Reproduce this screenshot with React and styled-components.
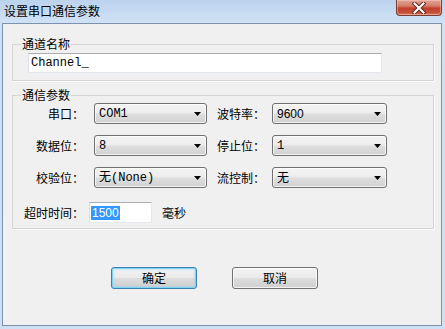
import React from 'react';
import styled, { createGlobalStyle } from 'styled-components';

const Global = createGlobalStyle`
  html, body { margin: 0; padding: 0; background: #cfe0f3; }
  body { font-family: "Noto Sans CJK SC", "Liberation Sans", sans-serif; font-size: 12px; color: #000; }
`;

const Window = styled.div`
  width: 445px;
  height: 329px;
  box-sizing: border-box;
  padding: 0 3px 3px 2px;
  display: flex;
  flex-direction: column;
  background: linear-gradient(to bottom, #bcd3ee 0px, #cfe1f5 22px, #cde0f4 100%);
`;

const TitleBar = styled.div`
  height: 23px;
  flex: none;
  display: flex;
  align-items: flex-start;
`;

const TitleText = styled.div`
  padding: 4px 0 0 2px;
  line-height: 14px;
  font-size: 12px;
`;

const CloseButton = styled.div`
  margin-left: auto;
  width: 46px;
  height: 16px;
  box-sizing: border-box;
  border: 1px solid #7a3a30;
  border-top: none;
  border-radius: 0 0 4px 4px;
  background: linear-gradient(to bottom, #e0a596 0%, #d47c69 40%, #c2402c 55%, #c5503a 85%, #dc8668 100%);
  box-shadow: inset 0 0 0 1px rgba(255, 210, 200, 0.45);
  display: flex;
  align-items: center;
  justify-content: center;
`;

const Content = styled.div`
  flex: 1;
  border: 1px solid #7d92ad;
  background: #f0f0f0;
  padding: 13px 7px 0 9px;
  display: flex;
  flex-direction: column;
`;

const Group = styled.fieldset`
  margin: ${p => p.$top || 0}px 0 0 0;
  padding: ${p => p.$pad};
  border: 1px solid #d5d5d5;
  box-shadow: 1px 1px 0 #ffffff;
  min-width: 0;
`;

const Legend = styled.legend`
  margin-left: 8px;
  padding: 0 1px;
  line-height: 14px;
  height: 14px;
  font-size: 12px;
`;

const NameRow = styled.div`
  padding-left: 15px;
  display: flex;
`;

const TextBox = styled.div`
  width: ${p => p.$w}px;
  height: ${p => p.$h}px;
  margin-left: ${p => p.$ml || 0}px;
  box-sizing: border-box;
  background: #fff;
  border: 1px solid #e3e9ef;
  border-top-color: #abadb3;
  border-left-color: #dbdfe6;
  display: flex;
  align-items: center;
  padding-left: ${p => p.$pl || 2}px;
  font-family: ${p => (p.$mono ? '"Liberation Mono", "Noto Sans CJK SC", monospace' : '"Liberation Sans", "Noto Sans CJK SC", sans-serif')};
  font-size: 12px;
`;

const Selected = styled.span`
  background: #3399ff;
  color: #fff;
  line-height: 14px;
  height: 14px;
  padding: 0 1px;
`;

const Grid = styled.div`
  display: grid;
  grid-template-columns: 70px 123px 55px 115px;
  grid-auto-rows: 21px;
  row-gap: 11px;
  padding-left: 11px;
  align-items: center;
`;

const Label = styled.div`
  text-align: ${p => (p.$right ? 'right' : 'left')};
  padding-right: ${p => (p.$right ? 10 : 0)}px;
  white-space: nowrap;
  font-size: 12px;
  line-height: 14px;
`;

const Combo = styled.div`
  width: ${p => p.$w}px;
  height: 21px;
  box-sizing: border-box;
  border: 1px solid #707070;
  border-radius: 3px;
  background: linear-gradient(to bottom, #f4f4f4 0%, #ececec 48%, #dedede 52%, #d2d2d2 100%);
  box-shadow: inset 0 0 0 1px rgba(255, 255, 255, 0.7);
  display: flex;
  align-items: center;
  padding: 0 5px 0 4px;
  font-family: ${p => (p.$mono ? '"Liberation Mono", "Noto Sans CJK SC", monospace' : '"Liberation Sans", "Noto Sans CJK SC", sans-serif')};
  font-size: 12px;
`;

const ComboValue = styled.span`
  flex: 1;
  white-space: nowrap;
  line-height: 14px;
`;

const TimeoutRow = styled.div`
  margin-top: 14px;
  padding-left: 11px;
  display: flex;
  align-items: center;
  height: 21px;
`;

const Unit = styled.span`
  margin-left: 10px;
  line-height: 14px;
`;

const ButtonRow = styled.div`
  margin-top: 38px;
  padding-left: 99px;
  display: flex;
  gap: 35px;
`;

const Button = styled.div`
  width: 86px;
  height: 22px;
  box-sizing: border-box;
  border: 1px solid ${p => (p.$default ? '#3c7fb1' : '#707070')};
  border-radius: 3px;
  background: linear-gradient(to bottom, #f3f3f3 0%, #ebebeb 48%, #dddddd 52%, #cfcfcf 100%);
  box-shadow: ${p => (p.$default ? 'inset 0 0 0 1px #7fd4f5, inset 0 0 2px 2px rgba(120, 210, 245, 0.35)' : 'inset 0 0 0 1px rgba(255,255,255,0.75)')};
  display: flex;
  align-items: center;
  justify-content: center;
  font-size: 12px;
  line-height: 14px;
`;

const Arrow = () => (
  <svg width="7" height="4" viewBox="0 0 7 4">
    <path d="M0 0 H7 L3.5 4 Z" fill="#000" />
  </svg>
);

const CloseX = () => (
  <svg width="14" height="12" viewBox="0 0 14 12">
    <path d="M2.5 1.5 L11.5 10.5 M11.5 1.5 L2.5 10.5" stroke="#5a2a24" strokeWidth="4" strokeLinecap="square" />
    <path d="M2.5 1.5 L11.5 10.5 M11.5 1.5 L2.5 10.5" stroke="#ffffff" strokeWidth="2" strokeLinecap="square" />
  </svg>
);

const Select = ({ w, value, mono }) => (
  <Combo $w={w} $mono={mono}>
    <ComboValue>{value}</ComboValue>
    <Arrow />
  </Combo>
);

export default function App() {
  return (
    <>
      <Global />
      <Window>
        <TitleBar>
          <TitleText>设置串口通信参数</TitleText>
          <CloseButton><CloseX /></CloseButton>
        </TitleBar>
        <Content>
          <Group $pad="2px 0 7px 0">
            <Legend>通道名称</Legend>
            <NameRow>
              <TextBox $w={354} $h={20} $mono $pl={2}>Channel_</TextBox>
            </NameRow>
          </Group>
          <Group $top={7} $pad="1px 0 5px 0">
            <Legend>通信参数</Legend>
            <Grid>
              <Label $right>串口：</Label>
              <Select w={113} value="COM1" mono />
              <Label>波特率：</Label>
              <Select w={115} value="9600" />
              <Label $right>数据位：</Label>
              <Select w={113} value="8" mono />
              <Label>停止位：</Label>
              <Select w={115} value="1" mono />
              <Label $right>校验位：</Label>
              <Select w={113} value="无(None)" mono />
              <Label>流控制：</Label>
              <Select w={115} value="无" />
            </Grid>
            <TimeoutRow>
              <Label>超时时间：</Label>
              <TextBox $w={63} $h={21} $pl={1} $ml={5}>
                <Selected>1500</Selected>
              </TextBox>
              <Unit>毫秒</Unit>
            </TimeoutRow>
          </Group>
          <ButtonRow>
            <Button $default>确定</Button>
            <Button>取消</Button>
          </ButtonRow>
        </Content>
      </Window>
    </>
  );
}
